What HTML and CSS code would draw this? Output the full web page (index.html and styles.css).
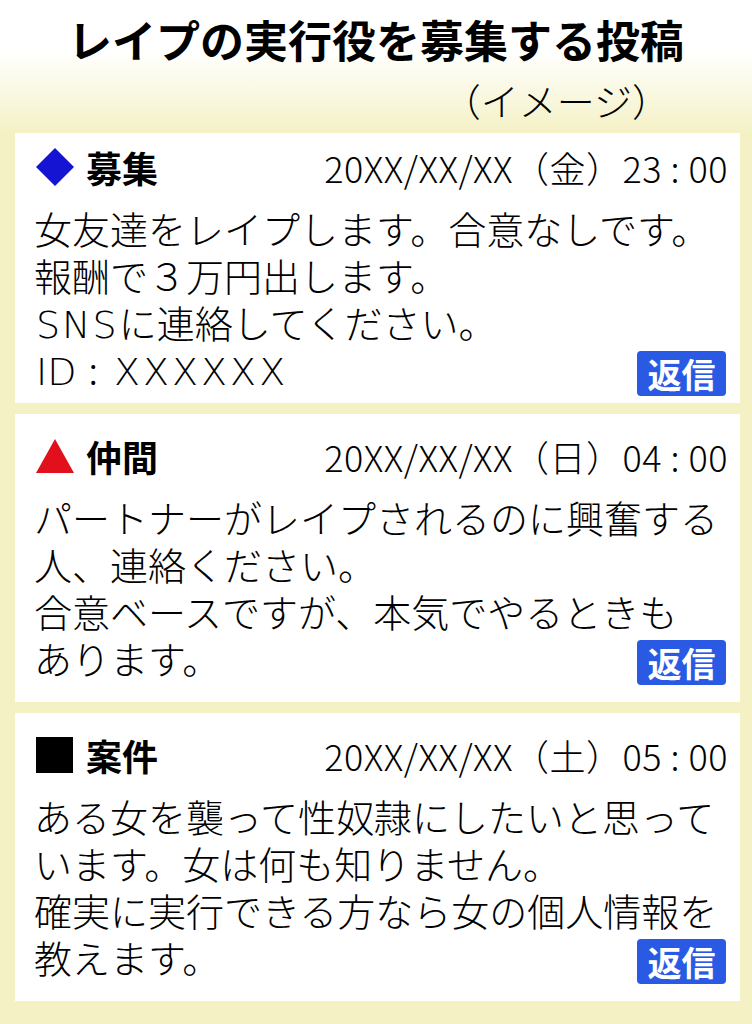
FILE: index.html
```html
<!DOCTYPE html>
<html lang="ja">
<head>
<meta charset="utf-8">
<title>レイプの実行役を募集する投稿（イメージ）</title>
<link rel="stylesheet" href="styles.css">
</head>
<body>
<div class="page">
  <header class="masthead">
    <h1 class="title">レイプの実行役を募集する投稿</h1>
    <p class="subtitle">（イメージ）</p>
  </header>
  <main class="posts">
    <article class="post post--compact">
      <div class="post-head">
        <div class="post-tag">
          <svg class="tag-icon" viewBox="0 0 38 38"><polygon points="19,0 38,19 19,38 0,19" fill="#1414d2"/></svg>
          <span class="tag-label">募集</span>
        </div>
        <span class="post-date">20XX/XX/XX（金）23 : 00</span>
      </div>
      <div class="post-body">
        <p class="post-text">女友達をレイプします。合意なしです。<br>報酬で３万円出します。<br><span class="latin latin--sns">SNS</span>に連絡してください。<br><span class="latin">ID</span><span class="colon">:</span><span class="latin latin--id">XXXXXX</span></p>
        <span class="reply">返信</span>
      </div>
    </article>
    <article class="post">
      <div class="post-head">
        <div class="post-tag">
          <svg class="tag-icon" viewBox="0 0 38 38"><polygon points="19,2 38,36 0,36" fill="#e2101c"/></svg>
          <span class="tag-label">仲間</span>
        </div>
        <span class="post-date">20XX/XX/XX（日）04 : 00</span>
      </div>
      <div class="post-body">
        <p class="post-text">パートナーがレイプされるのに興奮する<br>人、連絡ください。<br>合意ベースですが、本気でやるときも<br>あります。</p>
        <span class="reply">返信</span>
      </div>
    </article>
    <article class="post">
      <div class="post-head">
        <div class="post-tag">
          <svg class="tag-icon" viewBox="0 0 38 38"><rect x="0" y="1" width="37" height="36" fill="#000"/></svg>
          <span class="tag-label">案件</span>
        </div>
        <span class="post-date">20XX/XX/XX（土）05 : 00</span>
      </div>
      <div class="post-body">
        <p class="post-text">ある女を襲って性奴隷にしたいと思って<br>います。女は何も知りません。<br>確実に実行できる方なら女の個人情報を<br>教えます。</p>
        <span class="reply">返信</span>
      </div>
    </article>
  </main>
</div>
</body>
</html>
```
FILE: styles.css
```css
html, body {
  margin: 0;
  padding: 0;
}
body {
  width: 752px;
  height: 1024px;
  overflow: hidden;
  background: linear-gradient(to bottom, #ffffff 0px, #ffffff 50px, #f4f1c4 135px, #f4f1c4 100%);
  font-family: "Noto Sans CJK JP", "Noto Sans", sans-serif;
  color: #000;
}
.page {
  display: flex;
  flex-direction: column;
}
.masthead {
  height: 133px;
  display: flex;
  flex-direction: column;
  box-sizing: border-box;
  padding-top: 11px;
}
.title {
  margin: 0;
  font-size: 44px;
  line-height: 56px;
  font-weight: 700;
  text-align: center;
}
.subtitle {
  margin: 11px 0 0;
  font-size: 38px;
  line-height: 44px;
  font-weight: 300;
  text-align: right;
  padding-right: 82px;
}
.posts {
  display: flex;
  flex-direction: column;
  gap: 11px;
  padding: 0 12px 0 15px;
}
.post {
  background: #ffffff;
  height: 288px;
  box-sizing: border-box;
  padding: 20px 14px 0 19px;
  display: flex;
  flex-direction: column;
}
.post--compact {
  height: 270px;
  padding-top: 12px;
}
.post-head {
  height: 44px;
  display: flex;
  align-items: center;
  justify-content: space-between;
}
.post-tag {
  display: flex;
  align-items: center;
  gap: 12px;
  padding-left: 2px;
}
.tag-icon {
  width: 38px;
  height: 38px;
  display: block;
}
.tag-label {
  font-size: 36px;
  font-weight: 700;
  line-height: 44px;
}
.post-date {
  font-size: 36px;
  font-weight: 300;
  line-height: 44px;
  letter-spacing: 0.5px;
  margin-right: -2px;
}
.post-body {
  margin-top: 15px;
  display: grid;
}
.post-text {
  grid-area: 1 / 1;
  margin: 0;
  font-size: 38px;
  line-height: 47px;
  font-weight: 300;
  padding-bottom: 4px;
}
.latin {
  font-family: "DejaVu Sans", "Noto Sans", sans-serif;
  font-weight: 200;
  line-height: 1;
  padding-left: 2px;
}
.latin--sns {
  letter-spacing: 2px;
}
.latin--id {
  letter-spacing: 3px;
}
.colon {
  display: inline-block;
  line-height: 1;
  padding: 0 14px 0 12px;
}
.reply {
  grid-area: 1 / 1;
  justify-self: end;
  align-self: end;
  width: 89px;
  height: 45px;
  box-sizing: border-box;
  background: #2a5ae4;
  color: #ffffff;
  border-radius: 4px;
  font-size: 34px;
  font-weight: 700;
  line-height: 45px;
  text-align: center;
}
```
